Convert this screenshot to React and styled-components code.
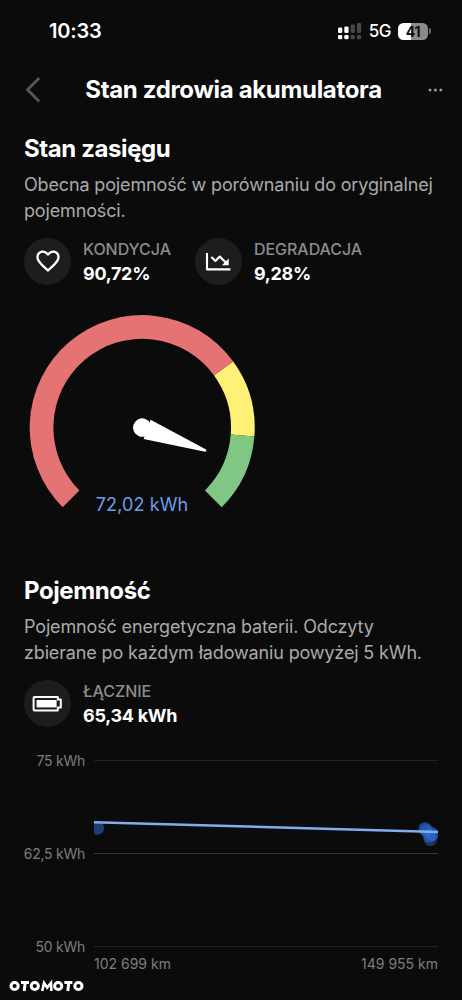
import React from 'react';
import styled, { createGlobalStyle } from 'styled-components';

const GlobalStyle = createGlobalStyle`
	* { box-sizing: border-box; }
	body {
		margin: 0;
		background: #0b0b0b;
		color: #fff;
		font-family: Inter, "Liberation Sans", sans-serif;
	}
	svg { display: block; }
	`;

const Screen = styled.div`
	width: 462px;
	height: 1000px;
	overflow: hidden;
	display: flex;
	flex-direction: column;
	background: #0b0b0b;
	`;

const StatusBar = styled.div`
	height: 62px;
	padding: 0 31px 0 49px;
	display: flex;
	align-items: center;
	justify-content: space-between;
	`;

const Clock = styled.div`
	font-size: 20px;
	font-weight: 600;
	letter-spacing: -0.2px;
	`;

const StatusIcons = styled.div`
	display: flex;
	align-items: center;
	`;

const Network = styled.div`
	font-size: 17px;
	font-weight: 500;
	letter-spacing: -0.5px;
	margin: 0 7px 0 7px;
	`;

const BatteryPill = styled.div`
	width: 30px;
	height: 17px;
	border-radius: 5.5px;
	background: linear-gradient(90deg, #fff 43%, #8b8b8b 43%);
	color: #0b0b0b;
	font-size: 14px;
	font-weight: 700;
	letter-spacing: -0.3px;
	line-height: 17px;
	text-align: center;
	`;

const BatteryTip = styled.div`
	width: 2px;
	height: 6px;
	margin-left: 1px;
	border-radius: 0 2px 2px 0;
	background: #6b6b6b;
	`;

const Header = styled.div`
	height: 56px;
	padding: 0 19px 0 24px;
	display: grid;
	grid-template-columns: 44px 1fr 44px;
	align-items: center;
	`;

const HeaderTitle = styled.h1`
	margin: 0;
	font-size: 24px;
	font-weight: 700;
	letter-spacing: -0.33px;
	line-height: 30px;
	text-align: center;
	white-space: nowrap;
	`;

const MoreButton = styled.div`
	justify-self: end;
	`;

const Section = styled.section`
	padding: 16px 24px 0;
	height: ${props => props.$height};
	`;

const SectionTitle = styled.h2`
	margin: 0;
	font-size: 24px;
	font-weight: 700;
	letter-spacing: -0.4px;
	line-height: 30px;
	`;

const Description = styled.p`
	margin: 8px 0 0;
	color: #aaa;
	font-size: 18px;
	letter-spacing: -0.15px;
	line-height: 26px;
	white-space: nowrap;
	`;

const Stats = styled.div`
	display: flex;
	gap: 24px;
	margin-top: 13px;
	`;

const Stat = styled.div`
	display: flex;
	align-items: center;
	gap: 12px;
	`;

const StatIcon = styled.div`
	width: 47px;
	height: 47px;
	margin-bottom: 2px;
	border-radius: 50%;
	background: #1d1d1d;
	display: flex;
	align-items: center;
	justify-content: center;
	`;

const StatLabel = styled.div`
	color: #8c8c8c;
	font-size: 16px;
	font-weight: 500;
	letter-spacing: -0.04px;
	line-height: 24px;
	`;

const StatValue = styled.div`
	font-size: 18px;
	font-weight: 700;
	letter-spacing: -0.3px;
	line-height: 26px;
	`;

const GaugeBox = styled.div`
	width: 236px;
	height: 205px;
	margin-top: 27px;
	display: grid;
	justify-items: center;
	align-items: end;
	> * { grid-area: 1 / 1; }
	`;

const GaugeValue = styled.div`
	padding-bottom: 2px;
	color: #6d9ce8;
	font-size: 18px;
	letter-spacing: 0.1px;
	line-height: 24px;
	`;

const ChartGrid = styled.div`
	display: grid;
	grid-template-columns: 61px 344px;
	column-gap: 9px;
	margin-top: 22px;
	color: #7d7d7d;
	font-size: 14px;
	letter-spacing: 0;
	line-height: 20px;
	`;

const YAxis = styled.div`
	display: flex;
	flex-direction: column;
	justify-content: space-between;
	align-items: flex-end;
	height: 206px;
	letter-spacing: -0.25px;
	white-space: nowrap;
	`;

const Plot = styled.div`
	padding-top: 8px;
	height: 206px;
	`;

const XAxis = styled.div`
	grid-column: 2;
	display: flex;
	justify-content: space-between;
	margin-top: -3px;
	`;

const Watermark = styled.div`
	position: absolute;
	left: 9px;
	top: 979px;
	`;

const SIGNAL = [
	{ x: 0, top: 4.5, on: true },
	{ x: 6.3, top: 3.5, on: true },
	{ x: 12.6, top: 1.5, on: false },
	{ x: 18.9, top: 0, on: false },
];

const SEGMENTS = [
	{ from: 0, to: 0.7, color: '#e57373' },
	{ from: 0.7, to: 0.85, color: '#fff176' },
	{ from: 0.85, to: 1, color: '#81c784' },
];

const READINGS = [
	{ x: 3.5, y: 69, opacity: 0.5 },
	{ x: 331, y: 70, opacity: 0.6 },
	{ x: 333, y: 72, opacity: 0.4 },
	{ x: 338, y: 75, opacity: 0.6 },
	{ x: 335.5, y: 77, opacity: 0.5 },
	{ x: 336.5, y: 80.5, opacity: 0.4 },
];

function SignalIcon() {
	return (
		<svg width="24" height="17" viewBox="0 0 24 17">
			{ SIGNAL.map(bar => (
				<g key={bar.x} fill={bar.on ? '#fff' : '#484848'}>
					<rect x={bar.x} y={bar.top} width="4.3" height={10 - bar.top} rx="1.3" />
					<rect x={bar.x} y="12" width="4.3" height="4.3" rx="1.3" />
				</g>
			))}
		</svg>
	)
}

function HeartIcon() {
	return (
		<svg width="28" height="28" viewBox="0 0 24 24" fill="#fff">
			<path d="M16.5 3c-1.74 0-3.41.81-4.5 2.09C10.91 3.81 9.24 3 7.5 3 4.42 3 2 5.42 2 8.5c0 3.78 3.4 6.86 8.55 11.54L12 21.35l1.45-1.32C18.6 15.36 22 12.28 22 8.5 22 5.42 19.58 3 16.5 3zm-4.4 15.55-.1.1-.1-.1C7.14 14.24 4 11.39 4 8.5 4 6.5 5.5 5 7.5 5c1.54 0 3.04.99 3.57 2.36h1.87C13.46 5.99 14.96 5 16.5 5c2 0 3.5 1.5 3.5 3.5 0 2.89-3.14 5.74-7.9 10.05z" />
		</svg>
	)
}

function TrendIcon() {
	return (
		<svg width="26" height="22" viewBox="0 0 26 22" fill="none" stroke="#fff" strokeWidth="2.1" strokeLinejoin="round">
			<path d="M2 3v16.4h23.4" />
			<path d="M6.4 7l4 3.9 4.3-4.3 6 6" />
			<path d="M23.7 8.4v6.8h-6.8z" fill="#fff" stroke="none" />
		</svg>
	)
}

function BatteryIcon() {
	return (
		<svg width="31" height="17" viewBox="0 0 31 17">
			<path d="M2.6 2h23.2v2.5h3v8h-3V15.4H2.6a1 1 0 0 1-1-1V3a1 1 0 0 1 1-1z" fill="none" stroke="#fff" strokeWidth="2" strokeLinejoin="round" />
			<rect x="4.6" y="5" width="20" height="7.4" fill="#fff" />
		</svg>
	)
}

function Gauge({ value }) {
	const point = (r, t) => {
		const a = (135 + 270 * t) * Math.PI / 180;
		return `${118.2 + r * Math.cos(a)} ${113.6 + r * Math.sin(a)}`;
	};

	return (
		<svg width="236" height="205" viewBox="0 0 236 205">
			{ SEGMENTS.map(({ from, to, color }) => {
				const large = to - from > 2 / 3 ? 1 : 0;
				return (
					<path
					  key={color}
					  fill={color}
					  d={`M${point(112.5, from)}A112.5 112.5 0 ${large} 1 ${point(112.5, to)}L${point(88.8, to)}A88.8 88.8 0 ${large} 0 ${point(88.8, from)}Z`} />
				)
			})}
			<g fill="#fff" transform={`translate(118.2 113.6) rotate(${135 + 270 * value - 360})`}>
				<circle r="9.2" />
				<path d="M5.2 -10.3L67.5 -1.2Q69 0 67.5 1.2L5.2 10.3Z" />
			</g>
		</svg>
	)
}

function CapacityPlot() {
	return (
		<svg width="344" height="188" viewBox="0 0 344 188">
			{ [1.5, 94.5, 187.5].map((y, i) => (
				<path key={y} d={`M0 ${y}H344`} stroke={i === 1 ? '#343434' : '#232323'} />
			))}
			{ READINGS.map(r => (
				<circle key={r.x} cx={r.x} cy={r.y} r="6.7" fill="#2f6fdb" opacity={r.opacity} />
			))}
			<path d="M0 63.2L344 73" stroke="#83acf0" strokeWidth="2.4" />
		</svg>
	)
}

function OtomotoLogo() {
	return (
		<svg width="76" height="14" viewBox="0 0 76 14" fill="none" stroke="#fff" strokeWidth="3">
			<circle cx="5.6" cy="7" r="3.6" />
			<path d="M12 3.4h8M16.2 3.4l-1 8.6" />
			<circle cx="25.8" cy="7" r="3.6" />
			<path d="M33.2 12L35 4l3.2 4.6L42 4l.4 8" strokeWidth="2.6" />
			<circle cx="49.2" cy="7" r="3.6" />
			<path d="M55.4 3.4h8M59.8 3.4l-1 8.6" />
			<circle cx="69.4" cy="7" r="3.6" />
		</svg>
	)
}

function StatItem({ icon, label, value }) {
	return (
		<Stat>
			<StatIcon>{icon}</StatIcon>
			<div>
				<StatLabel>{label}</StatLabel>
				<StatValue>{value}</StatValue>
			</div>
		</Stat>
	)
}

function App() {
	return (
		<>
			<GlobalStyle />
			<Screen>
				<StatusBar>
					<Clock>10:33</Clock>
					<StatusIcons>
						<SignalIcon />
						<Network>5G</Network>
						<BatteryPill>41</BatteryPill>
						<BatteryTip />
					</StatusIcons>
				</StatusBar>
				<Header>
					<svg width="18" height="28" viewBox="0 0 18 28" fill="none" stroke="#585858" strokeWidth="2.8">
						<path d="M15.2 2L3.6 13.8L15.2 25.6" />
					</svg>
					<HeaderTitle>Stan zdrowia akumulatora</HeaderTitle>
					<MoreButton>
						<svg width="16" height="6" viewBox="0 0 16 6" fill="#9a9a9a">
							<circle cx="3" cy="3" r="1.5" />
							<circle cx="8.4" cy="3" r="1.5" />
							<circle cx="13.8" cy="3" r="1.5" />
						</svg>
					</MoreButton>
				</Header>
				<Section $height="442px">
					<SectionTitle>Stan zasięgu</SectionTitle>
					<Description>
						Obecna pojemność w porównaniu do oryginalnej<br />pojemności.
					</Description>
					<Stats>
						<StatItem icon={<HeartIcon />} label="KONDYCJA" value="90,72%" />
						<StatItem icon={<TrendIcon />} label="DEGRADACJA" value="9,28%" />
					</Stats>
					<GaugeBox>
						<Gauge value={0.9072} />
						<GaugeValue>72,02 kWh</GaugeValue>
					</GaugeBox>
				</Section>
				<Section $height="440px">
					<SectionTitle>Pojemność</SectionTitle>
					<Description>
						Pojemność energetyczna baterii. Odczyty<br />zbierane po każdym ładowaniu powyżej 5 kWh.
					</Description>
					<Stats>
						<StatItem icon={<BatteryIcon />} label="ŁĄCZNIE" value="65,34 kWh" />
					</Stats>
					<ChartGrid>
						<YAxis>
							<span>75 kWh</span>
							<span>62,5 kWh</span>
							<span>50 kWh</span>
						</YAxis>
						<Plot><CapacityPlot /></Plot>
						<XAxis>
							<span>102 699 km</span>
							<span>149 955 km</span>
						</XAxis>
					</ChartGrid>
				</Section>
				<Watermark><OtomotoLogo /></Watermark>
			</Screen>
		</>
	)
}

export default App;
